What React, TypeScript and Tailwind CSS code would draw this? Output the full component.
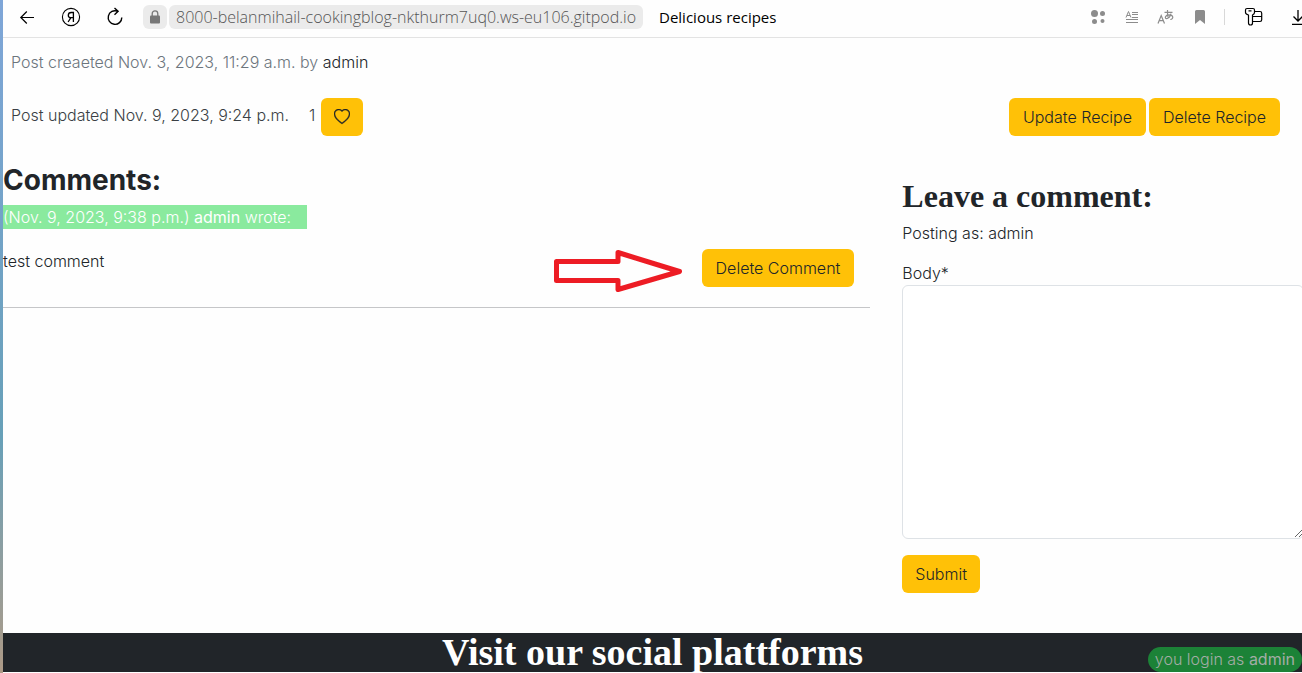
import type { ReactNode } from "react";

const amber =
  "h-[38px] rounded-md bg-[#ffc107] text-base leading-6 font-light text-[#212529]";

function ToolButton({ label, children }: { label: string; children: ReactNode }) {
  return (
    <button type="button" aria-label={label} className="flex h-6 w-5 shrink-0 items-center justify-center">
      {children}
    </button>
  );
}

function Toolbar() {
  return (
    <header className="flex h-[38px] items-center justify-between overflow-hidden border-b border-[#e3e3e3] pb-[3px] pl-3.5 font-['Open_Sans',sans-serif] text-[15px] font-normal text-black">
      <div className="flex items-center">
        <nav className="flex items-center gap-6">
          <ToolButton label="Back">
            <svg width="20" height="20" viewBox="0 0 20 20" fill="none" stroke="currentColor" strokeWidth="1.2">
              <path d="M17 10.500H3.800M9.800 4.500L3.800 10.500l6 6" />
            </svg>
          </ToolButton>
          <ToolButton label="Home">
            <svg width="20" height="20" viewBox="0 0 20 20" fill="none" stroke="currentColor" strokeWidth="1.1" className="shrink-0">
              <circle cx="10" cy="10" r="8.6" />
              <path d="M12.400 15V5.500H10.400C8.300 5.500 7.300 6.700 7.300 8.200c0 1.600 1 2.500 2.600 2.500h2.500M9.900 10.700L7.100 15" strokeWidth="1.300" />
            </svg>
          </ToolButton>
          <ToolButton label="Reload">
            <svg width="20" height="20" viewBox="0 0 20 20" fill="none" stroke="currentColor" strokeWidth="1.4">
              <path d="M16.800 10.500A6.800 6.800 0 1 1 12.500 4.200M9.500 1l3.600 3.300-3.600 3.400" />
            </svg>
          </ToolButton>
        </nav>
        <button type="button" aria-label="Site information" className="ml-[18px] flex h-6 w-6 items-center justify-center rounded-md bg-[#ebebeb] text-[#777]">
          <svg width="12" height="14" viewBox="0 0 12 14">
            <rect x="1" y="5.500" width="10" height="8" rx="1" fill="currentColor" />
            <path d="M3.200 6V3.700a2.800 2.800 0 0 1 5.600 0V6" fill="none" stroke="currentColor" strokeWidth="1.300" />
          </svg>
        </button>
        <a href="#recipe" className="ml-0.5 h-6 rounded-md bg-[#ebebeb] px-[7px] text-base leading-6 font-light text-[#555]">
          8000-belanmihail-cookingblog-nkthurm7uq0.ws-eu106.gitpod.io
        </a>
        <span className="ml-4 leading-6">Delicious recipes</span>
      </div>
      <div className="-mr-1.5 flex items-center text-[#8c8c8c]">
        <div className="flex items-center gap-3.5">
          <ToolButton label="Extensions">
            <svg width="16" height="16" viewBox="0 0 16 16" fill="currentColor">
              <circle cx="4.500" cy="4.500" r="3.500" />
              <circle cx="12.500" cy="4.500" r="2.500" />
              <circle cx="4.500" cy="12.500" r="2.500" />
              <circle cx="12.500" cy="12" r="2" />
            </svg>
          </ToolButton>
          <ToolButton label="Reader mode">
            <svg width="14" height="14" viewBox="0 0 14 14" fill="none" stroke="currentColor">
              <path d="M1 7.500L3.500 1.500 6 7.500M2 5.500h3M7 2.500h6M7 4.500h6M7 7.500h6M1 9.500h12M1 12.500h12" />
            </svg>
          </ToolButton>
          <ToolButton label="Translate">
            <svg width="18" height="16" viewBox="0 0 18 16" fill="none" stroke="currentColor" strokeWidth="1.200">
              <path d="M1 14.500L4.200 6.500 7.500 14.500M2.200 11.700h4.200M7.500 3.400h8M10.500 1c-.2 3.200 0 6 .9 8.400M14 4.600c-.7 2.800-2.500 4.900-4.500 5-2 0-1.500-3.700 2.500-3.800 4.800 0 4.800 4.300 1.300 4.700" />
            </svg>
          </ToolButton>
          <ToolButton label="Bookmark">
            <svg width="12" height="14" viewBox="0 0 12 14" fill="currentColor">
              <path d="M1 1.500Q1 0 2.500 0h7Q11 0 11 1.500V14L6 10 1 14Z" />
            </svg>
          </ToolButton>
        </div>
        <span className="mr-[19px] ml-3.5 h-4 w-px bg-[#d8d8d8]" />
        <div className="flex items-center gap-6 text-black">
          <ToolButton label="Passwords">
            <svg width="20" height="20" viewBox="0 0 20 20" fill="none" stroke="currentColor" strokeWidth="1.200" strokeLinejoin="round" className="shrink-0">
              <path d="M3 1.500h6q1.500 0 1.500 1.500v2.500q0 1.500-2 2.500v8q0 2-2 2t-2-2V8q-3-1-3-2.500V3Q1.500 1.500 3 1.500ZM4.500 3.800h3M10.700 4.500H16q1.700 0 1.700 1.700v6.600q0 1.700-1.700 1.700H8.500M8.500 9.500h9.200" />
            </svg>
          </ToolButton>
          <ToolButton label="Downloads">
            <svg width="16" height="18" viewBox="0 0 16 18" fill="none" stroke="currentColor" strokeWidth="1.300">
              <path d="M8 2v11M3.500 8.500L8 13l4.500-4.500M2 16.300h12" />
            </svg>
          </ToolButton>
        </div>
      </div>
    </header>
  );
}

export default function App() {
  return (
    <div className="flex min-h-screen overflow-hidden bg-[#fefefe] font-['Inter',sans-serif] text-base leading-6 font-light text-[#212529]">
      <div className="w-[3px] shrink-0 bg-linear-to-b from-[#7fa6d8] via-[#67a0b8] via-65% to-[#ad9a86]" />
      <div className="relative min-w-0 grow">
        <Toolbar />
        <main>
          <p className="px-2 pt-3 text-[#6c757d]">
            Post creaeted Nov. 3, 2023, 11:29 a.m. by <span className="text-[#212529]">admin</span>
          </p>
          <div className="mt-6 flex items-start justify-between pr-[22px] pl-2">
            <div className="flex items-start">
              <span className="leading-[35px] text-[#3a3f44]">Post updated Nov. 9, 2023, 9:24 p.m.</span>
              <span className="ml-5 leading-[35px] text-[#3a3f44]">1</span>
              <button type="button" aria-label="Like" className={`ml-1.5 flex items-center px-[13px] ${amber}`}>
                <svg width="16" height="16" viewBox="0 0 16 16" fill="currentColor" stroke="currentColor" strokeWidth="0.4">
                  <path d="m8 2.748-.717-.737C5.600.281 2.514.878 1.400 3.053c-.523 1.023-.641 2.500.314 4.385.920 1.815 2.834 3.989 6.286 6.357 3.452-2.368 5.365-4.542 6.286-6.357.955-1.886.838-3.362.314-4.385C13.486.878 10.400.280 8.717 2.010zM8 15C-7.333 4.868 3.279-3.040 7.824 1.143q.090.083.176.171a3 3 0 0 1 .176-.170C12.720-3.042 23.333 4.867 8 15" />
                </svg>
              </button>
            </div>
            <div className="flex gap-[3px]">
              <button type="button" className={`px-3.5 ${amber}`}>Update Recipe</button>
              <button type="button" className={`px-3.5 ${amber}`}>Delete Recipe</button>
            </div>
          </div>
          <div className="-mr-0.5 grid grid-cols-[2fr_1fr]">
            <section className="min-w-0 pt-7">
              <h3 className="text-[28px] leading-[33px] font-bold">Comments:</h3>
              <p className="mt-2 w-fit bg-[#8aea9e] pr-4 text-white">
                (Nov. 9, 2023, 9:38 p.m.) <span className="font-normal">admin</span> wrote:
              </p>
              <div className="mt-5 flex items-start justify-between border-b border-[#c5c6c8] pr-4 pb-5">
                <p>test comment</p>
                <div className="relative">
                  <svg width="128" height="42" viewBox="0 0 128 42" fill="none" stroke="#ed1c24" strokeWidth="5" strokeLinejoin="round" aria-hidden="true" className="absolute top-px right-full mr-5">
                    <path d="M2.500 11.500H64V2.500L125.500 21.500 64 39.500V30.500H2.500Z" />
                  </svg>
                  <button type="button" className={`px-3.5 ${amber}`}>Delete Comment</button>
                </div>
              </div>
            </section>
            <form className="min-w-0 pt-[42px] pl-8" onSubmit={(e) => e.preventDefault()}>
              <h3 className="font-['Liberation_Serif',serif] text-[32px] leading-9 font-bold whitespace-nowrap">
                Leave a comment:
              </h3>
              <p className="mt-[7px]">Posting as: admin</p>
              <label htmlFor="body" className="mt-4 block">Body*</label>
              <textarea id="body" className="block h-[254px] w-full resize rounded-md border border-[#dee2e6] bg-white px-3 py-1.5 outline-none" />
              <button type="submit" className={`mt-4 px-[13px] ${amber}`}>Submit</button>
            </form>
          </div>
        </main>
        <footer className="mt-10 bg-[#212529]">
          <h2 className="text-center font-['Liberation_Serif',serif] text-[38px] leading-[39px] font-bold text-white">
            Visit our social plattforms
          </h2>
        </footer>
        <p className="absolute right-0 bottom-px rounded-full bg-[#1c8237] px-[7px] leading-[25px] text-[#a3ada6]">
          you login as <span className="font-normal">admin</span>
        </p>
      </div>
    </div>
  );
}
